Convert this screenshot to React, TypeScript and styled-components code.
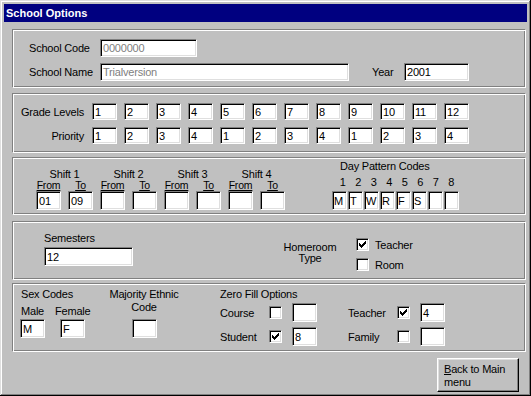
import React from 'react'
import styled, { createGlobalStyle } from 'styled-components'

const GlobalStyle = createGlobalStyle`
  html, body {
    margin: 0;
    padding: 0;
    background: #c0c0c0;
  }
  body {
    font-family: "Liberation Sans", Arial, sans-serif;
    font-size: 11px;
    letter-spacing: -0.2px;
    color: #000;
  }
`

const Window = styled.div`
  box-sizing: border-box;
  width: 531px;
  height: 396px;
  padding: 4px;
  background: #c0c0c0;
  box-shadow:
    inset -1px -1px 0 #000,
    inset 1px 1px 0 #dfdfdf,
    inset -2px -2px 0 #808080,
    inset 2px 2px 0 #fff;
  display: flex;
  flex-direction: column;
`

const TitleBar = styled.div`
  height: 18px;
  line-height: 18px;
  padding-left: 2px;
  background: #000080;
  color: #fff;
  font-weight: bold;
  font-size: 11px;
  letter-spacing: 0;
`

const Body = styled.div`
  display: flex;
  flex-direction: column;
  padding-left: 8px;
`

// etched frame, gray line with a white line under it
const Group = styled.div<{ $h: number; $top: number }>`
  box-sizing: border-box;
  width: 514px;
  height: ${p => p.$h}px;
  margin-top: ${p => p.$top}px;
  border-top: 1px solid #808080;
  border-left: 1px solid #808080;
  border-bottom: 1px solid #fff;
  border-right: 1px solid #fff;
  box-shadow: inset 1px 1px 0 #fff, inset -1px -1px 0 #808080;
`

const Field = styled.div<{ $w: number; $h?: number; $dim?: boolean }>`
  box-sizing: border-box;
  width: ${p => p.$w}px;
  height: ${p => p.$h ?? 19}px;
  flex: none;
  padding-left: 2px;
  background: #fff;
  border-top: 1px solid #808080;
  border-left: 1px solid #808080;
  border-bottom: 1px solid #fff;
  border-right: 1px solid #fff;
  box-shadow: inset 1px 1px 0 #000, inset -1px -1px 0 #dfdfdf;
  color: ${p => (p.$dim ? '#808080' : '#000')};
  display: flex;
  align-items: center;
  white-space: nowrap;
  overflow: hidden;
`

const Label = styled.div<{ $w?: number; $right?: boolean }>`
  width: ${p => (p.$w ? `${p.$w}px` : 'auto')};
  flex: none;
  text-align: ${p => (p.$right ? 'right' : 'left')};
  line-height: 12px;
  white-space: nowrap;
`

/* school */
const SchoolInner = styled.div`
  padding: 9px 0 0 16px;
  display: flex;
  flex-direction: column;
  gap: 6px;
`

const Row = styled.div<{ $gap?: number }>`
  display: flex;
  align-items: center;
  gap: ${p => p.$gap ?? 0}px;
`

const YearLabel = styled(Label)`
  margin-left: 23px;
`

/* grades */
const GradeInner = styled.div`
  padding-top: 9px;
  display: flex;
  flex-direction: column;
  gap: 7px;
`

const RowLabel = styled(Label)`
  margin-right: 8px;
`

const Cells = styled.div`
  display: flex;
  gap: 7px;
`

/* shifts */
const ShiftInner = styled.div`
  box-sizing: border-box;
  height: 100%;
  padding: 0 0 4px 23px;
  display: flex;
  align-items: flex-end;
`

const Shifts = styled.div`
  display: flex;
  gap: 7px;
`

const Shift = styled.div`
  display: flex;
  flex-direction: column;
  align-items: center;
`

const ShiftTitle = styled.div`
  line-height: 12px;
  white-space: nowrap;
`

const ShiftPair = styled.div`
  display: flex;
  gap: 7px;
`

const ShiftCol = styled.div`
  width: 25px;
  display: flex;
  flex-direction: column;
  align-items: center;
`

const SubLabel = styled.div`
  font-size: 10.5px;
  line-height: 11px;
  text-decoration: underline;
  text-underline-offset: 1px;
`

const DayBlock = styled.div`
  margin-left: 47px;
  display: flex;
  flex-direction: column;
`

const DayTitle = styled.div`
  padding-left: 8px;
  line-height: 12px;
  margin-bottom: 4px;
  white-space: nowrap;
`

const DayNums = styled.div`
  display: flex;
  padding-left: 3px;
  margin-bottom: 3px;
`

const DayNum = styled.span`
  width: 15.5px;
  text-align: center;
  line-height: 12px;
`

const DayBoxes = styled.div`
  display: flex;
  gap: 1px;
`

const DayBox = styled(Field)`
  padding-left: 1px;
`

/* semesters and homeroom */
const SemInner = styled.div`
  display: flex;
  align-items: flex-start;
`

const SemCol = styled.div`
  margin: 10px 0 0 31px;
  display: flex;
  flex-direction: column;
  gap: 3px;
`

const Homeroom = styled.div`
  width: 60px;
  margin: 20px 0 0 147px;
  text-align: center;
  line-height: 11px;
`

const CheckCol = styled.div`
  margin: 16px 0 0 16px;
  display: flex;
  flex-direction: column;
  gap: 7px;
`

const CheckRow = styled.div`
  display: flex;
  align-items: center;
  gap: 6px;
  height: 13px;
`

const Box = styled.div`
  box-sizing: border-box;
  width: 13px;
  height: 13px;
  flex: none;
  padding: 2px;
  background: #fff;
  border-top: 1px solid #808080;
  border-left: 1px solid #808080;
  border-bottom: 1px solid #fff;
  border-right: 1px solid #fff;
  box-shadow: inset 1px 1px 0 #000, inset -1px -1px 0 #dfdfdf;
  display: flex;
`

/* bottom group */
const CodesInner = styled.div`
  padding-top: 4px;
  display: flex;
  align-items: flex-start;
`

const SexBlock = styled.div`
  margin-left: 7px;
  display: flex;
  flex-direction: column;
`

const SexTitle = styled(Label)`
  padding-left: 1px;
  margin-bottom: 5px;
`

const SexRow = styled.div`
  display: flex;
`

const SexCol = styled.div<{ $w: number; $shift?: number; $gap?: number }>`
  width: ${p => p.$w}px;
  margin-left: ${p => p.$gap ?? 0}px;
  display: flex;
  flex-direction: column;
  gap: 2px;
  & > ${Field} {
    margin-left: ${p => p.$shift ?? 0}px;
  }
`

const SexLabel = styled(Label)`
  padding-left: 1px;
`

const Majority = styled.div`
  width: 80px;
  margin-left: 13px;
  display: flex;
  flex-direction: column;
  align-items: center;
  text-align: center;
  line-height: 13px;
  & > ${Field} {
    margin-top: 5px;
  }
`

const ZeroBlock = styled.div`
  margin-left: 36px;
  display: flex;
  flex-direction: column;
`

const ZeroTitle = styled(Label)`
  height: 15px;
`

const ZeroGrid = styled.div`
  display: grid;
  grid-template-columns: 49px 23px 56px 49px 23px 25px;
  grid-auto-rows: 19px;
  row-gap: 5px;
  align-items: center;
`

const Footer = styled.div`
  display: flex;
  justify-content: flex-end;
  margin-top: 6px;
  padding-right: 8px;
`

const Button = styled.div`
  box-sizing: border-box;
  width: 82px;
  height: 34px;
  padding: 4px 0 0 6px;
  border-top: 1px solid #fff;
  border-left: 1px solid #fff;
  border-bottom: 1px solid #000;
  border-right: 1px solid #000;
  box-shadow: inset -1px -1px 0 #808080, inset 1px 1px 0 #dfdfdf;
  line-height: 13px;
`

const Tick = () => (
  <svg width="7" height="7" viewBox="0 0 7 7" shapeRendering="crispEdges">
    <path
      fill="#000"
      d="M6 0h1v3h-1zM5 1h1v3h-1zM4 2h1v3h-1zM3 3h1v3h-1zM2 4h1v3h-1zM1 3h1v3h-1zM0 2h1v3h-1z"
    />
  </svg>
)

const Check = ({ on }: { on?: boolean }) => <Box>{on && <Tick />}</Box>

const grades = ['1', '2', '3', '4', '5', '6', '7', '8', '9', '10', '11', '12']
const priority = ['1', '2', '3', '4', '1', '2', '3', '4', '1', '2', '3', '4']
const shifts = [
  { from: '01', to: '09' },
  { from: '', to: '' },
  { from: '', to: '' },
  { from: '', to: '' },
]
const days = ['M', 'T', 'W', 'R', 'F', 'S', '', '']

const App = () => {
  return (
    <>
      <GlobalStyle />
      <Window>
        <TitleBar>School Options</TitleBar>
        <Body>
          <Group $h={59} $top={7}>
            <SchoolInner>
              <Row>
                <Label $w={71}>School Code</Label>
                <Field $w={97} $h={18} $dim>0000000</Field>
              </Row>
              <Row>
                <Label $w={71}>School Name</Label>
                <Field $w={249} $h={18} $dim>Trialversion</Field>
                <YearLabel $w={32}>Year</YearLabel>
                <Field $w={65} $h={18}>2001</Field>
              </Row>
            </SchoolInner>
          </Group>

          <Group $h={60} $top={5}>
            <GradeInner>
              <Row>
                <RowLabel $w={71} $right>Grade Levels</RowLabel>
                <Cells>
                  {grades.map((g, i) => (
                    <Field key={i} $w={25} $h={17}>{g}</Field>
                  ))}
                </Cells>
              </Row>
              <Row>
                <RowLabel $w={71} $right>Priority</RowLabel>
                <Cells>
                  {priority.map((g, i) => (
                    <Field key={i} $w={25} $h={17}>{g}</Field>
                  ))}
                </Cells>
              </Row>
            </GradeInner>
          </Group>

          <Group $h={58} $top={4}>
            <ShiftInner>
              <Shifts>
                {shifts.map((s, i) => (
                  <Shift key={i}>
                    <ShiftTitle>Shift {i + 1}</ShiftTitle>
                    <ShiftPair>
                      <ShiftCol>
                        <SubLabel>From</SubLabel>
                        <Field $w={25}>{s.from}</Field>
                      </ShiftCol>
                      <ShiftCol>
                        <SubLabel>To</SubLabel>
                        <Field $w={25}>{s.to}</Field>
                      </ShiftCol>
                    </ShiftPair>
                  </Shift>
                ))}
              </Shifts>
              <DayBlock>
                <DayTitle>Day Pattern Codes</DayTitle>
                <DayNums>
                  {days.map((_, i) => (
                    <DayNum key={i}>{i + 1}</DayNum>
                  ))}
                </DayNums>
                <DayBoxes>
                  {days.map((d, i) => (
                    <DayBox key={i} $w={15}>{d}</DayBox>
                  ))}
                </DayBoxes>
              </DayBlock>
            </ShiftInner>
          </Group>

          <Group $h={59} $top={6}>
            <SemInner>
              <SemCol>
                <Label>Semesters</Label>
                <Field $w={89}>12</Field>
              </SemCol>
              <Homeroom>
                Homeroom
                <br />
                Type
              </Homeroom>
              <CheckCol>
                <CheckRow>
                  <Check on />
                  <Label>Teacher</Label>
                </CheckRow>
                <CheckRow>
                  <Check />
                  <Label>Room</Label>
                </CheckRow>
              </CheckCol>
            </SemInner>
          </Group>

          <Group $h={69} $top={3}>
            <CodesInner>
              <SexBlock>
                <SexTitle>Sex Codes</SexTitle>
                <SexRow>
                  <SexCol $w={25}>
                    <SexLabel>Male</SexLabel>
                    <Field $w={25}>M</Field>
                  </SexCol>
                  <SexCol $w={36} $gap={10} $shift={5}>
                    <Label>Female</Label>
                    <Field $w={25}>F</Field>
                  </SexCol>
                </SexRow>
              </SexBlock>
              <Majority>
                Majority Ethnic
                <br />
                Code
                <Field $w={25} />
              </Majority>
              <ZeroBlock>
                <ZeroTitle>Zero Fill Options</ZeroTitle>
                <ZeroGrid>
                  <Label>Course</Label>
                  <Check />
                  <Field $w={25} />
                  <Label>Teacher</Label>
                  <Check on />
                  <Field $w={25}>4</Field>
                  <Label>Student</Label>
                  <Check on />
                  <Field $w={25}>8</Field>
                  <Label>Family</Label>
                  <Check />
                  <Field $w={25} />
                </ZeroGrid>
              </ZeroBlock>
            </CodesInner>
          </Group>

          <Footer>
            <Button>
              <u>B</u>ack to Main
              <br />
              menu
            </Button>
          </Footer>
        </Body>
      </Window>
    </>
  )
}

export default App
